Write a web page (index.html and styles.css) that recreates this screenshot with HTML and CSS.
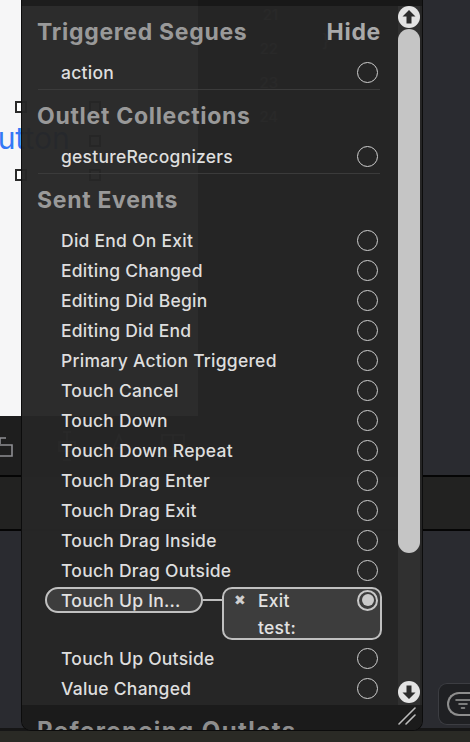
FILE: index.html
```html
<!DOCTYPE html>
<html>
<head>
<meta charset="utf-8">
<link rel="stylesheet" href="styles.css">
</head>
<body>
<div class="ide">
  <div class="top">
    <div class="canvas">
      <span class="btn-label">Button</span>
      <span class="handle hd-tl"></span>
      <span class="handle hd-tr"></span>
      <span class="handle hd-mr"></span>
      <span class="handle hd-bl"></span>
      <span class="handle hd-br"></span>
    </div>
    <div class="editor">
      <div class="gutter"><div>21</div><div>22</div><div>23</div><div>24</div></div>
      <div class="code"><div class="brace">}</div></div>
    </div>
    <div class="inspector"></div>
  </div>
  <div class="tools">
    <div class="canvas-bar">
      <svg class="tool-icon first" width="20" height="26" viewBox="0 0 20 26"><path d="M0 5H10M4 5V11M1 12H16V23H1Z" fill="none" stroke="#8e8e93" stroke-width="1.6"/></svg>
      <svg class="tool-icon" width="22" height="30" viewBox="0 0 22 30"><path d="M11 1V29M3 11H19V20H3ZM7 1H15M7 29H15" fill="none" stroke="#8e8e93" stroke-width="1.6"/></svg>
      <svg class="tool-icon" width="22" height="30" viewBox="0 0 22 30"><path d="M2 26L11 4L20 26M6 17H16" fill="none" stroke="#8e8e93" stroke-width="1.6"/></svg>
      <svg class="tool-icon" width="26" height="30" viewBox="0 0 26 30"><path d="M2 4H24V26H2ZM13 4V26" fill="none" stroke="#8e8e93" stroke-width="1.6"/></svg>
    </div>
    <div class="inspector"></div>
  </div>
  <div class="band"></div>
  <div class="lower">
    <div class="filter-btn">
      <span class="filter-pill">
        <svg width="20" height="14" viewBox="0 0 20 14"><path d="M3 3H17M6 7H14M8.5 11H11.5" stroke="#9a9a9a" stroke-width="1.6" stroke-linecap="round"/></svg>
      </span>
    </div>
  </div>
  <div class="status"></div>
</div>

<div class="panel">
  <div class="strip"></div>
  <div class="main">
    <div class="list">
      <div class="sec-head"><span>Triggered Segues</span><span class="hide">Hide</span></div>
      <div class="row"><span>action</span><span class="radio"></span></div>
      <div class="sep"></div>
      <div class="sec-head"><span>Outlet Collections</span></div>
      <div class="row"><span>gestureRecognizers</span><span class="radio"></span></div>
      <div class="sep"></div>
      <div class="sec-head"><span>Sent Events</span></div>
      <div class="row"><span>Did End On Exit</span><span class="radio"></span></div>
      <div class="row"><span>Editing Changed</span><span class="radio"></span></div>
      <div class="row"><span>Editing Did Begin</span><span class="radio"></span></div>
      <div class="row"><span>Editing Did End</span><span class="radio"></span></div>
      <div class="row"><span>Primary Action Triggered</span><span class="radio"></span></div>
      <div class="row"><span>Touch Cancel</span><span class="radio"></span></div>
      <div class="row"><span>Touch Down</span><span class="radio"></span></div>
      <div class="row"><span>Touch Down Repeat</span><span class="radio"></span></div>
      <div class="row"><span>Touch Drag Enter</span><span class="radio"></span></div>
      <div class="row"><span>Touch Drag Exit</span><span class="radio"></span></div>
      <div class="row"><span>Touch Drag Inside</span><span class="radio"></span></div>
      <div class="row"><span>Touch Drag Outside</span><span class="radio"></span></div>
      <div class="conn-row">
        <div class="pill">Touch Up In...</div>
        <div class="wire"></div>
        <div class="target">
          <div class="t-line"><span class="x">✖</span><span class="t-name">Exit</span><span class="radio filled"></span></div>
          <div class="t-line"><span class="t-name indent">test:</span></div>
        </div>
      </div>
      <div class="row"><span>Touch Up Outside</span><span class="radio"></span></div>
      <div class="row"><span>Value Changed</span><span class="radio"></span></div>
    </div>
    <div class="scroll">
      <div class="sbtn"><svg width="22" height="22" viewBox="0 0 22 22"><path d="M11 4L17.5 10.5H13.5V17.5H8.5V10.5H4.5Z" fill="#2d2d2d"/></svg></div>
      <div class="thumb"></div>
      <div class="sbtn down"><svg width="22" height="22" viewBox="0 0 22 22"><path d="M11 18L17.5 11.5H13.5V4.5H8.5V11.5H4.5Z" fill="#2d2d2d"/></svg></div>
    </div>
  </div>
  <div class="footer">
    <span class="foot-title">Referencing Outlets</span>
    <svg class="grip" width="18" height="18" viewBox="0 0 18 18"><path d="M1 17L17 1M8 17L17 8" stroke="#bcbcbc" stroke-width="1.6" stroke-linecap="round"/></svg>
  </div>
</div>
</body>
</html>
```

FILE: styles.css
```css
html, body {
  margin: 0;
  padding: 0;
}
body {
  width: 470px;
  height: 742px;
  overflow: hidden;
  position: relative;
  font-family: Inter, "Noto Sans", "DejaVu Sans", sans-serif;
  background: #2a2b30;
}

/* ---------- background IDE ---------- */
.ide {
  width: 470px;
  height: 742px;
  display: flex;
  flex-direction: column;
}
.top {
  height: 416px;
  display: flex;
}
.canvas {
  width: 198px;
  background: #f6f6f7;
  position: relative;
  overflow: hidden;
}
.btn-label {
  position: absolute;
  left: -22px;
  top: 120px;
  font-size: 30px;
  line-height: 36px;
  color: #3478f6;
}
.handle {
  position: absolute;
  width: 12px;
  height: 12px;
  box-sizing: border-box;
  border: 2px solid #2b2b2b;
  background: #ffffff;
}
.hd-tl { left: 15px; top: 101px; }
.hd-tr { left: 89px; top: 101px; }
.hd-mr { left: 89px; top: 135px; }
.hd-bl { left: 15px; top: 169px; }
.hd-br { left: 89px; top: 169px; }

.editor {
  flex: 1;
  background: #1e1e1e;
  display: flex;
}
.gutter {
  width: 80px;
  margin-top: -2px;
  text-align: right;
  font-size: 15px;
  line-height: 34px;
  color: #8c8c8c;
}
.code {
  flex: 1;
  padding-left: 44px;
  padding-top: 30px;
  font-size: 18px;
  color: #8c8c8c;
}
.inspector {
  width: 48px;
  background: #2a2b30;
}
.tools {
  height: 59px;
  display: flex;
}
.canvas-bar {
  width: 422px;
  background: #1e1e1e;
  display: flex;
  align-items: center;
  gap: 30px;
}
.tool-icon.first {
  margin-left: -4px;
  margin-right: 10px;
}
.band {
  height: 56px;
  box-sizing: border-box;
  background: #222221;
  border-top: 2px solid #050505;
  border-bottom: 2px solid #050505;
}
.lower {
  flex: 1;
  background: #2a2b30;
  display: flex;
  justify-content: flex-end;
  align-items: flex-end;
  padding-bottom: 3px;
}
.filter-btn {
  width: 32px;
  height: 42px;
  box-sizing: border-box;
  border: 1px solid #3c3d42;
  border-right: none;
  border-radius: 9px 0 0 9px;
  background: #1f2023;
  display: flex;
  align-items: center;
  padding-left: 8px;
}
.filter-pill {
  width: 34px;
  height: 24px;
  flex: none;
  box-sizing: border-box;
  border: 2px solid #8e8e8e;
  border-right: none;
  border-radius: 12px 0 0 12px;
  display: flex;
  align-items: center;
  padding-left: 4px;
}
.status {
  height: 14px;
  box-sizing: border-box;
  border-top: 3px solid #161616;
  background: #2a2a25;
}

/* ---------- connections popover ---------- */
.panel {
  position: absolute;
  left: 21px;
  top: 0;
  width: 402px;
  height: 731px;
  box-sizing: border-box;
  border: 1px solid #0c0c0c;
  border-top: none;
  border-radius: 0 0 10px 10px;
  background: rgba(38, 38, 38, 0.973);
  display: flex;
  flex-direction: column;
  overflow: hidden;
}
.strip {
  height: 6px;
  flex: none;
  background: rgba(0, 0, 0, 0.33);
}
.main {
  height: 699px;
  flex: none;
  display: flex;
}
.list {
  flex: 1;
  min-width: 0;
  display: flex;
  flex-direction: column;
}
.sec-head {
  height: 40px;
  flex: none;
  margin: 6px 17px 5px 15px;
  display: flex;
  align-items: center;
  justify-content: space-between;
  font-size: 23px;
  font-weight: 700;
  letter-spacing: 0.7px;
  color: #999999;
}
.hide {
  color: #a9a9a9;
}
.row {
  height: 30px;
  flex: none;
  display: flex;
  align-items: center;
  justify-content: space-between;
  padding: 0 20px 0 39px;
  font-size: 17.5px;
  font-weight: 500;
  letter-spacing: 0.25px;
  color: #dedede;
}
.sep {
  height: 1px;
  flex: none;
  margin: 2px 18px 0 16px;
  background: #3b3b3b;
}
.radio {
  width: 21px;
  height: 21px;
  flex: none;
  box-sizing: border-box;
  border: 1.8px solid #cfcfcf;
  border-radius: 50%;
}
.radio.filled {
  border-width: 2px;
  border-color: #c8c8c8;
  display: flex;
  align-items: center;
  justify-content: center;
}
.radio.filled::after {
  content: "";
  width: 12px;
  height: 12px;
  border-radius: 50%;
  background: #cacaca;
}
.conn-row {
  height: 58px;
  flex: none;
  box-sizing: border-box;
  padding: 2px 0 0 23px;
  display: flex;
  align-items: flex-start;
}
.pill {
  width: 158px;
  height: 26px;
  flex: none;
  box-sizing: border-box;
  border: 2px solid #c0c0c0;
  border-radius: 13px;
  background: #3d3d3d;
  padding-left: 14px;
  display: flex;
  align-items: center;
  font-size: 17.5px;
  font-weight: 500;
  letter-spacing: 0.25px;
  color: #e2e2e2;
}
.wire {
  width: 19px;
  height: 2px;
  flex: none;
  margin-top: 12px;
  background: #bdbdbd;
}
.target {
  width: 160px;
  height: 53px;
  flex: none;
  box-sizing: border-box;
  border: 2px solid #c0c0c0;
  border-radius: 10px;
  background: #3d3d3d;
  padding: 0 2px 0 10px;
  display: flex;
  flex-direction: column;
  gap: 5px;
}
.t-line {
  height: 22px;
  display: flex;
  align-items: center;
  font-size: 17.5px;
  font-weight: 500;
  letter-spacing: 0.25px;
  color: #e2e2e2;
}
.x {
  width: 13px;
  margin-right: 11px;
  font-family: "DejaVu Sans", sans-serif;
  font-size: 14px;
  color: #cfcfcf;
}
.t-name {
  flex: 1;
}
.indent {
  margin-left: 24px;
}
.scroll {
  width: 22px;
  margin-right: 2px;
  flex: none;
  background: #303030;
  display: flex;
  flex-direction: column;
}
.sbtn {
  width: 22px;
  height: 22px;
  flex: none;
  border-radius: 50%;
  background: #e4e4e4;
}
.sbtn svg {
  display: block;
}
.thumb {
  height: 524px;
  flex: none;
  margin-top: 1px;
  border-radius: 11px;
  background: #c5c5c5;
}
.sbtn.down {
  margin-top: auto;
  margin-bottom: 2px;
}
.footer {
  height: 25px;
  flex: none;
  background: #1b1b1b;
  display: flex;
  justify-content: space-between;
  padding-left: 15px;
  overflow: hidden;
}
.foot-title {
  padding-top: 12px;
  font-size: 24px;
  line-height: 28px;
  font-weight: 700;
  letter-spacing: 1.4px;
  color: #8e8e8e;
  white-space: nowrap;
}
.grip {
  flex: none;
  margin: 2px 6px 0 0;
}
```
